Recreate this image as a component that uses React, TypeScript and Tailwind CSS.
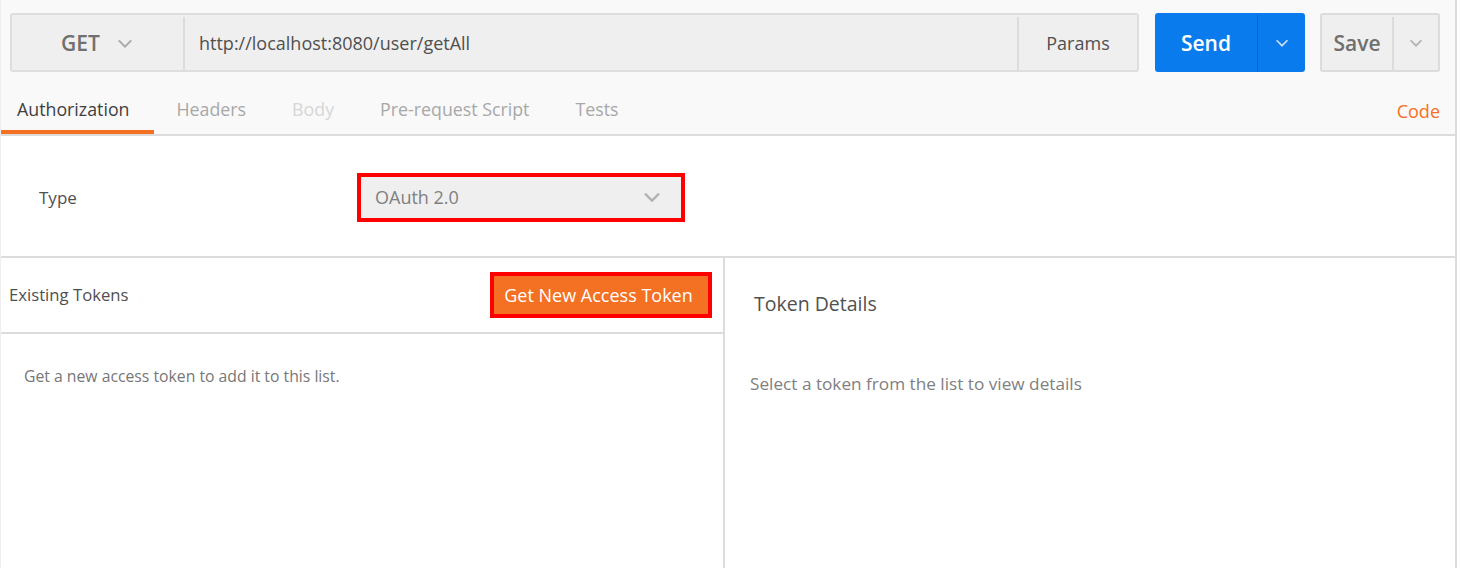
import type { ReactNode } from 'react';

const Chevron = ({ className, color = '#9a9a9a', w = 16 }: { className?: string; color?: string; w?: number }) => (
  <svg width={w} height={w * 0.6} viewBox="0 0 16 10" className={className} fill="none">
    <polyline points="1.5,1.5 8,8 14.5,1.5" stroke={color} strokeWidth="2" />
  </svg>
);

const Tab = ({ children, active, first, tone }: { children: ReactNode; active?: boolean; first?: boolean; tone: string }) => (
  <div
    className={`flex h-[46px] items-center border-b-4 ${first ? 'pl-[16px] pr-[24px]' : 'px-[23px]'} ${
      active ? 'border-[#f47023]' : 'border-transparent'
    } ${tone}`}
  >
    {children}
  </div>
);

const App = () => {
  return (
    <div className="flex h-screen overflow-hidden bg-white font-['Open_Sans',sans-serif]">
      <div className="flex w-[1457px] flex-col border-l border-r-2 border-l-[#eeeeee] border-r-[#dcdcdc]">
        {/* request bar + tabs */}
        <div className="bg-[#f9f9f9]">
          <div className="mt-[13px] flex h-[59px] items-stretch pl-[9px] pr-[15px]">
            <div className="flex flex-1 overflow-hidden rounded-[3px] border-2 border-[#dedede] bg-[#efefef] pt-[2px]">
              <div className="flex w-[173px] items-center border-r-2 border-[#dcdcdc] pl-[49px]">
                <span className="text-[21px] font-semibold text-[#707070]">GET</span>
                <Chevron className="ml-[17px]" w={16} color="#a8a8a8" />
              </div>
              <div className="flex flex-1 items-center pl-[14px] text-[18px] text-[#505050]">
                http://localhost:8080/user/getAll
              </div>
              <div className="flex w-[120px] items-center justify-center border-l-2 border-[#dcdcdc] text-[18px] text-[#505050]">
                Params
              </div>
            </div>
            <div className="ml-[16px] flex w-[150px] overflow-hidden rounded-[3px] bg-[#097bed] pt-[2px]">
              <div className="flex w-[103px] items-center justify-center border-r border-[#0a64c2] text-[21px] font-semibold text-white">
                Send
              </div>
              <div className="flex flex-1 items-center justify-center">
                <Chevron w={14} color="#c9dcf2" />
              </div>
            </div>
            <div className="ml-[15px] flex w-[120px] overflow-hidden rounded-[3px] border-2 border-[#dcdcdc] bg-[#efefef] pt-[2px]">
              <div className="flex w-[72px] items-center justify-center border-r-2 border-[#dcdcdc] text-[21px] font-semibold text-[#707070]">
                Save
              </div>
              <div className="flex flex-1 items-center justify-center">
                <Chevron w={14} color="#b0b0b0" />
              </div>
            </div>
          </div>
          <div className="flex h-[64px] items-end border-b-2 border-[#dcdcdc] text-[17.8px]">
            <Tab active first tone="text-[#404040]">Authorization</Tab>
            <Tab tone="text-[#a8a8a8]">Headers</Tab>
            <Tab tone="text-[#d6d6d6]">Body</Tab>
            <Tab tone="text-[#a8a8a8]">Pre-request Script</Tab>
            <Tab tone="text-[#a8a8a8]">Tests</Tab>
            <div className="ml-auto flex h-[46px] items-center pr-[15px] text-[18px] text-[#f47023]">Code</div>
          </div>
        </div>

        {/* auth type */}
        <div className="flex h-[122px] items-start border-b-2 border-[#dcdcdc] pt-[37px]">
          <div className="flex h-[49px] w-[356px] items-center pl-[38px] text-[17px] text-[#505050]">Type</div>
          <div className="flex h-[49px] w-[328px] items-center justify-between border-4 border-[#ff0000] bg-[#efefef] pl-[14px] pr-[20px] text-[18px] text-[#808080]">
            <span>OAuth 2.0</span>
            <Chevron w={18} color="#b0b0b0" />
          </div>
        </div>

        {/* tokens */}
        <div className="flex flex-1">
          <div className="flex w-[724px] flex-col border-r-2 border-[#dcdcdc]">
            <div className="flex h-[76px] items-center justify-between border-b-2 border-[#dcdcdc] pl-[8px] pr-[11px]">
              <span className="text-[16.7px] text-[#505050]">Existing Tokens</span>
              <div className="flex h-[46px] w-[222px] items-center justify-center border-4 border-[#ff0000] bg-[#f47023] pr-[5px] text-[18px] text-white">
                Get New Access Token
              </div>
            </div>
            <div className="pl-[23px] pt-[32px] text-[15.75px] leading-[20px] text-[#777777]">
              Get a new access token to add it to this list.
            </div>
          </div>
          <div className="flex flex-1 flex-col">
            <div className="pl-[29px] pt-[33px] text-[19.5px] leading-[26px] text-[#505050]">Token Details</div>
            <div className="pl-[25px] pt-[57px] text-[17.2px] leading-[20px] text-[#808080]">
              Select a token from the list to view details
            </div>
          </div>
        </div>
      </div>
    </div>
  );
};

export default App;
